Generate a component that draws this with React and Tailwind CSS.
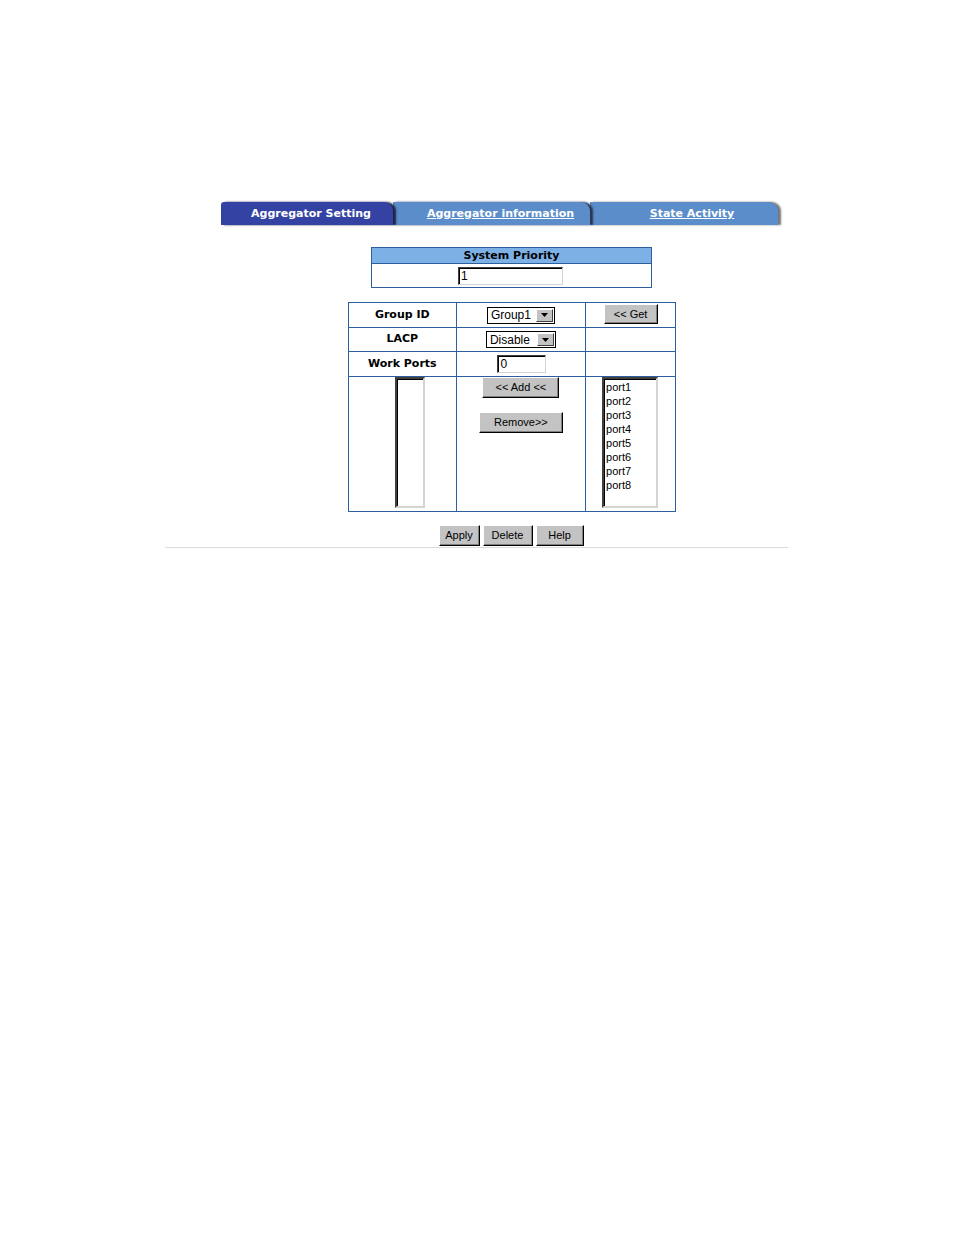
import React from "react"

const ports = ["port1", "port2", "port3", "port4", "port5", "port6", "port7", "port8"]

const btn =
  "bg-[#c3c3c3] border border-t-white border-l-white border-r-black border-b-black text-[11px] text-black leading-none font-['Liberation_Sans',Arial,sans-serif] shadow-[inset_-1px_-1px_0_#808080]"

function Select({ value, w }) {
  return (
    <div className={`flex items-center h-[17px] border border-black bg-white ${w}`}>
      <span className="flex-1 pl-[3px] text-[12px] leading-none text-black font-['Liberation_Sans',Arial,sans-serif]">
        {value}
      </span>
      <span className="flex items-center justify-center w-[17px] h-[13px] mr-[1px] bg-[#c3c3c3] border border-t-white border-l-white border-r-[#404040] border-b-[#404040]">
        <svg width="7" height="4" viewBox="0 0 7 4">
          <path d="M0 0h7L3.5 4z" fill="#000" />
        </svg>
      </span>
    </div>
  )
}

function TextBox({ value, w }) {
  return (
    <div
      className={`h-[18px] bg-white border border-t-[#404040] border-l-[#404040] border-r-[#d4d4d4] border-b-[#d4d4d4] shadow-[inset_1px_1px_0_#000] pl-[2px] text-[12px] leading-[16px] text-black font-['Liberation_Sans',Arial,sans-serif] ${w}`}
    >
      {value}
    </div>
  )
}

export default function App() {
  return (
    <div className="w-[954px] min-h-[1235px] bg-white pt-[202px] font-['DejaVu_Sans',Verdana,sans-serif]">
      {/* Tabs */}
      <div className="ml-[221px] w-[563px] h-[23px] flex">
        <div className="w-[172px] h-full bg-[#3443a3] rounded-tl-[3px] rounded-tr-[9px] flex items-center justify-center text-white text-[11px] font-bold shadow-[3px_0_2px_#1c2440] relative z-10 pl-[8px] pt-[1px]">
          Aggregator Setting
        </div>
        <div className="w-[197px] h-full bg-[#5b8dca] flex items-center justify-center text-white text-[11px] font-bold underline shadow-[3px_0_2px_#2a3550] relative z-[5] rounded-tr-[9px] pl-[18px] pt-[1px]">
          Aggregator information
        </div>
        <div className="w-[188px] h-full bg-[#5b8dca] rounded-tr-[9px] flex items-center justify-center text-white text-[11px] font-bold underline shadow-[3px_0_2px_#777] pl-[16px] pt-[1px]">
          State Activity
        </div>
      </div>

      {/* System priority */}
      <div className="mt-[22px] ml-[371px] w-[281px] border border-[#2c5f9e]">
        <div className="h-[16px] bg-[#7db1e6] border-b border-[#2c5f9e] flex items-center justify-center text-[11px] font-bold text-black pt-[1px]">
          System Priority
        </div>
        <div className="h-[23px] flex items-center justify-center pr-[74px]">
          <TextBox value="1" w="w-[105px] ml-[72px]" />
        </div>
      </div>

      {/* Aggregator group */}
      <table className="mt-[14px] ml-[348px] w-[328px] border-collapse border border-[#2c5f9e] text-[11px] text-black">
        <tbody>
          <tr className="h-[25px]">
            <td className="w-[108px] border border-[#2c5f9e] text-center font-bold">Group ID</td>
            <td className="w-[130px] border border-[#2c5f9e]">
              <div className="flex justify-center">
                <Select value="Group1" w="w-[68px]" />
              </div>
            </td>
            <td className="w-[90px] border border-[#2c5f9e]">
              <div className="flex justify-center">
                <button className={`${btn} w-[54px] h-[20px] mb-[2px]`}>&lt;&lt; Get</button>
              </div>
            </td>
          </tr>
          <tr className="h-[24px]">
            <td className="border border-[#2c5f9e] text-center font-bold">LACP</td>
            <td className="border border-[#2c5f9e]">
              <div className="flex justify-center">
                <Select value="Disable" w="w-[70px]" />
              </div>
            </td>
            <td className="border border-[#2c5f9e]"></td>
          </tr>
          <tr className="h-[25px]">
            <td className="border border-[#2c5f9e] text-center font-bold">Work Ports</td>
            <td className="border border-[#2c5f9e]">
              <div className="flex justify-center pl-[2px]">
                <TextBox value="0" w="w-[49px]" />
              </div>
            </td>
            <td className="border border-[#2c5f9e]"></td>
          </tr>
          <tr className="h-[135px]">
            <td className="border border-[#2c5f9e] align-top">
              <div className="flex justify-center pl-[16px]">
                <div className="w-[30px] h-[131px] bg-white border-2 border-t-[#404040] border-l-[#404040] border-r-[#d4d4d4] border-b-[#d4d4d4] shadow-[inset_1px_1px_0_#000]" />
              </div>
            </td>
            <td className="border border-[#2c5f9e] align-top">
              <div className="flex flex-col items-center gap-[14px]">
                <button className={`${btn} w-[77px] h-[21px]`}>&lt;&lt; Add &lt;&lt;</button>
                <button className={`${btn} w-[84px] h-[21px]`}>Remove&gt;&gt;</button>
              </div>
            </td>
            <td className="border border-[#2c5f9e] align-top">
              <div className="flex justify-center pr-[1px]">
                <div className="w-[56px] h-[131px] bg-white border-2 border-t-[#404040] border-l-[#404040] border-r-[#d4d4d4] border-b-[#d4d4d4] shadow-[inset_1px_1px_0_#000] pl-[2px] pt-[1px] font-['Liberation_Sans',Arial,sans-serif] text-[11px] leading-[14px] text-black">
                  {ports.map((p) => (
                    <div key={p}>{p}</div>
                  ))}
                </div>
              </div>
            </td>
          </tr>
        </tbody>
      </table>

      {/* Actions */}
      <div className="mt-[13px] flex justify-center gap-[3px] pl-[68px] w-[954px]">
        <button className={`${btn} w-[41px] h-[21px]`}>Apply</button>
        <button className={`${btn} w-[50px] h-[21px]`}>Delete</button>
        <button className={`${btn} w-[48px] h-[21px]`}>Help</button>
      </div>
      <div className="ml-[165px] w-[623px] h-[1px] bg-[#dcdcdc] mt-[1px]" />
    </div>
  )
}
